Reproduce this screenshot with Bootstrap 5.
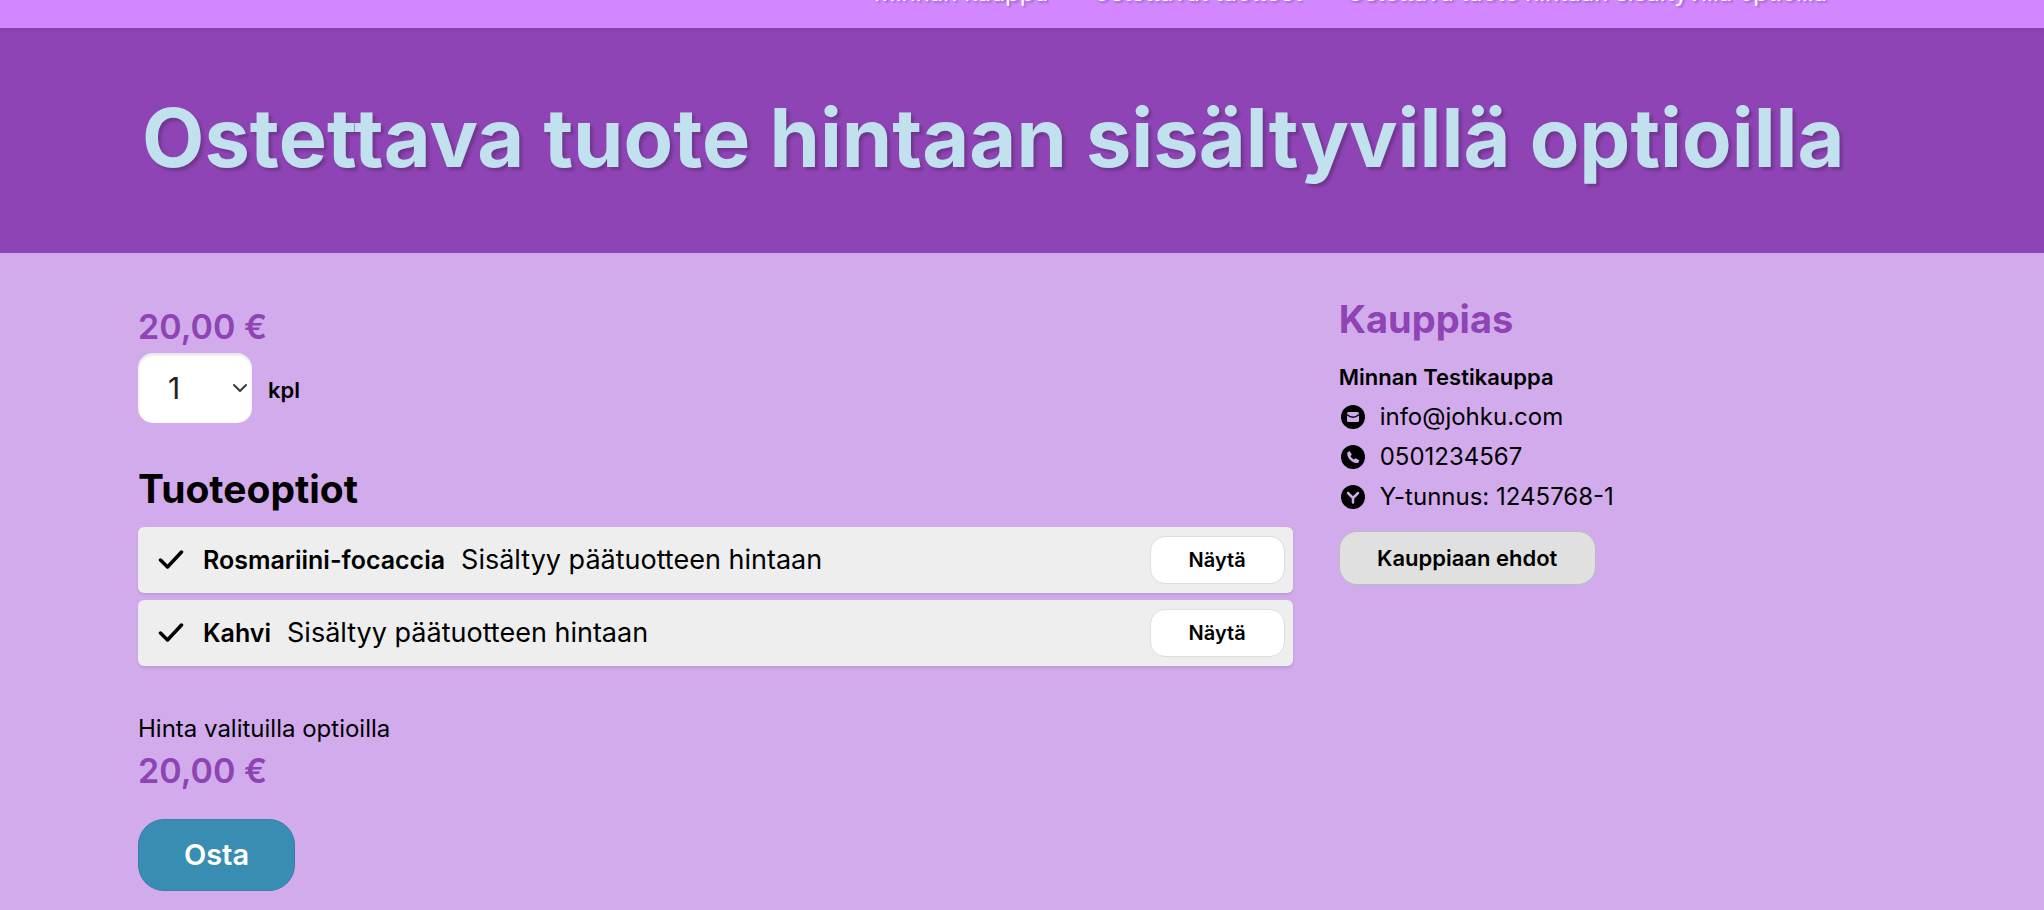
<!DOCTYPE html>
<html lang="fi">
<head>
<meta charset="utf-8">
<meta name="viewport" content="width=device-width, initial-scale=1">
<title>Ostettava tuote hintaan sisältyvillä optioilla</title>
<link href="https://cdn.jsdelivr.net/npm/bootstrap@5.3.0/dist/css/bootstrap.min.css" rel="stylesheet">
<style>
body{background:#d2abec;color:#000;font-family:Inter,"Liberation Sans",sans-serif;font-size:24px;line-height:32px}
a{color:inherit;text-decoration:none}
.shell{padding-left:138px;padding-right:151px}
.crumb-bar{background:#d286ff;height:28px;padding-bottom:19px;overflow:hidden;color:#fff}
.crumb-bar .breadcrumb{font-size:24px;line-height:32px;gap:44px;padding-right:66px;text-shadow:2px 2px 2px rgba(0,0,0,.2)}
.hero-band{background:linear-gradient(rgba(0,0,0,.06),transparent 6px) #8e44b4;padding-top:62px;padding-bottom:67px}
.hero-band h1{font-size:81px;line-height:96px;font-weight:700;color:#c1e1ee;text-shadow:3px 3px 3px rgba(0,0,0,.2)}
.main-area{padding-top:44px;padding-bottom:16px}
.main-row{--bs-gutter-x:46px}
.price{font-size:34px;line-height:44px;font-weight:600;color:#8e44b4}
.qty{width:114px;height:70px;border:0;border-radius:15px;background-color:#fff;font-size:30px;padding:0 0 0 30px;color:#222;box-shadow:inset 0 2px 3px rgba(0,0,0,.12);background-position:right 4px center;background-size:16px 16px}
.name-text{font-size:22px;font-weight:600}
.options-title{font-size:39px;line-height:44px;font-weight:700;margin:44px 0 16px}
.seller-title{font-size:38px;line-height:44px;font-weight:700;color:#8e44b4;margin-bottom:20px}
.option-list{gap:7px;margin-bottom:47px}
.option-row{background:#eee;border-radius:6px;min-height:66px;padding:0 8px 0 20px;font-size:27px;box-shadow:0 2px 3px rgba(0,0,0,.1)}
.option-row strong{font-size:25px;font-weight:600;margin-left:19px}
.shop-btn{font-weight:600;color:#000;border:1px solid #ddd;padding:0}
.btn-show{width:135px;height:48px;border-radius:15px;background:#fff;font-size:20px}
.btn-buy{width:157px;height:72px;border-color:#3480a1;border-radius:26px;background:#3a8db2;color:#fff;font-size:29px;margin-top:26px}
.btn-terms{width:257px;height:54px;border-color:#bbb;border-radius:18px;background:#e0e0e0;font-size:22px;margin-top:14px}
.contact-list{line-height:40px}
.contact-list li{gap:15px;padding-left:2px}
</style>
</head>
<body>
<header class="crumb-bar d-flex align-items-end">
  <nav class="shell w-100" aria-label="Murupolku">
    <ol class="breadcrumb justify-content-end mb-0">
      <li><a href="#">Minnan kauppa</a></li>
      <li><a href="#">Ostettavat tuotteet</a></li>
      <li aria-current="page">Ostettava tuote hintaan sisältyvillä optioilla</li>
    </ol>
  </nav>
</header>
<section class="hero-band">
  <div class="shell"><h1 class="mb-0 ps-1">Ostettava tuote hintaan sisältyvillä optioilla</h1></div>
</section>
<main class="shell main-area">
  <div class="row main-row">
    <div class="col-8 pt-2">
      <div class="price mb-1">20,00 €</div>
      <div class="d-flex align-items-center">
        <select class="form-select qty" id="qty"><option>1</option><option>2</option><option>3</option></select>
        <label for="qty" class="ms-3 pt-1 name-text">kpl</label>
      </div>
      <h2 class="options-title">Tuoteoptiot</h2>
      <div class="option-list d-flex flex-column">
        <div class="option-row d-flex align-items-center">
          <svg width="26" height="20" viewBox="0 0 26 20" fill="none" stroke="#000" stroke-width="3.500" stroke-linecap="round" stroke-linejoin="round" aria-hidden="true"><path d="M2.500 10l7 7L23.500 2"/></svg>
          <strong>Rosmariini-focaccia</strong><span class="ms-3">Sisältyy päätuotteen hintaan</span>
          <button type="button" class="btn shop-btn btn-show ms-auto">Näytä</button>
        </div>
        <div class="option-row d-flex align-items-center">
          <svg width="26" height="20" viewBox="0 0 26 20" fill="none" stroke="#000" stroke-width="3.500" stroke-linecap="round" stroke-linejoin="round" aria-hidden="true"><path d="M2.500 10l7 7L23.500 2"/></svg>
          <strong>Kahvi</strong><span class="ms-3">Sisältyy päätuotteen hintaan</span>
          <button type="button" class="btn shop-btn btn-show ms-auto">Näytä</button>
        </div>
      </div>
      <div class="mb-1">Hinta valituilla optioilla</div>
      <div class="price">20,00 €</div>
      <button type="button" class="btn shop-btn btn-buy">Osta</button>
    </div>
    <div class="col-4">
      <h2 class="seller-title">Kauppias</h2>
      <div class="name-text mb-1">Minnan Testikauppa</div>
      <ul class="contact-list list-unstyled mb-0">
        <li class="d-flex align-items-center">
          <svg width="24" height="24" viewBox="0 0 24 24" aria-hidden="true"><circle cx="12" cy="12" r="12"/><rect x="6" y="7" width="12" height="10" rx="1.5" fill="#d2abec"/><path d="M6 9.500q6 5.500 12 0" fill="none" stroke="#000" stroke-width="1.500"/></svg>
          <a href="mailto:info@johku.com">info@johku.com</a>
        </li>
        <li class="d-flex align-items-center">
          <svg width="24" height="24" viewBox="0 0 24 24" aria-hidden="true"><circle cx="12" cy="12" r="12"/><path d="M6.300 7.500L8.500 6l2.300 3.600-1.300 1.700q1.200 2.400 3.500 3.300l1.600-1.300 3.700 2-1 2.400q-3.500 1.400-7.500-2.200T6.300 7.500z" fill="#d2abec"/></svg>
          <a href="tel:0501234567">0501234567</a>
        </li>
        <li class="d-flex align-items-center">
          <svg width="24" height="24" viewBox="0 0 24 24" aria-hidden="true"><circle cx="12" cy="12" r="12"/><path d="M7 8l5 5 5-5M12 13v4.500" fill="none" stroke="#d2abec" stroke-width="2.500" stroke-linecap="round" stroke-linejoin="round"/></svg>
          <span>Y-tunnus: 1245768-1</span>
        </li>
      </ul>
      <button type="button" class="btn shop-btn btn-terms">Kauppiaan ehdot</button>
    </div>
  </div>
</main>
<script src="https://cdn.jsdelivr.net/npm/bootstrap@5.3.0/dist/js/bootstrap.bundle.min.js"></script>
</body>
</html>
